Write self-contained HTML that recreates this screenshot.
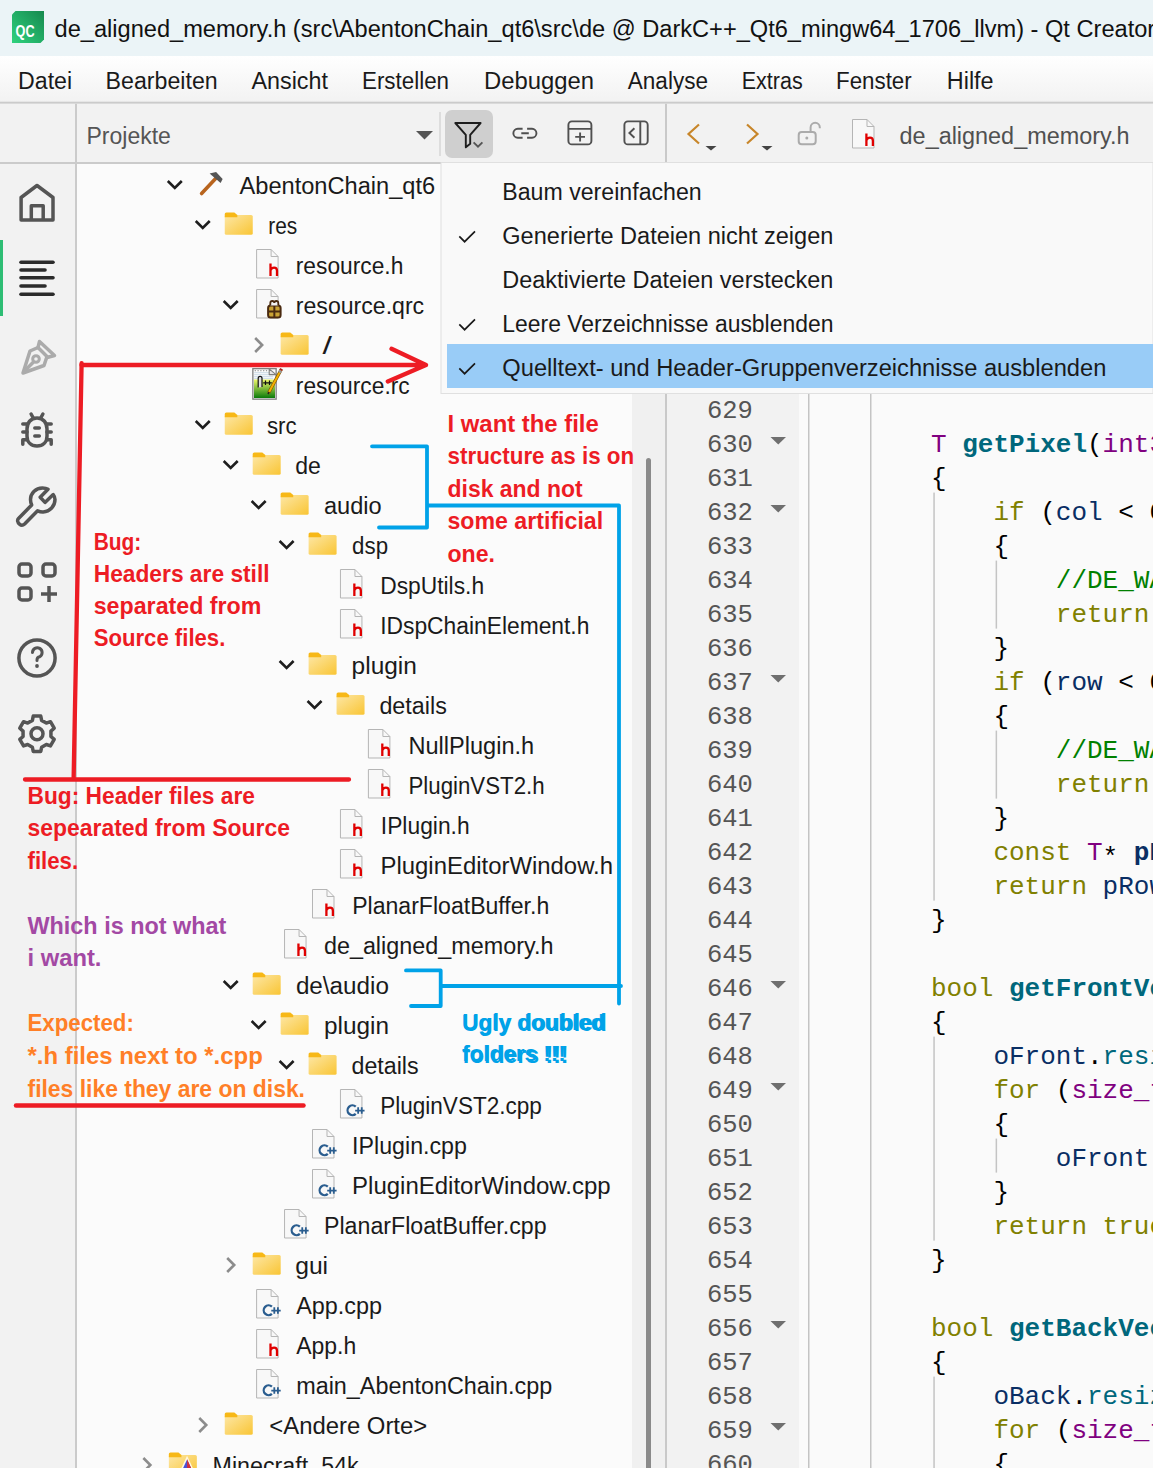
<!DOCTYPE html>
<html><head><meta charset="utf-8"><title>Qt Creator</title>
<style>html,body{margin:0;padding:0;overflow:hidden;background:#fafafa;width:1153px;height:1468px} svg{display:block} text{white-space:pre}</style>
</head><body><svg width="1153" height="1468" viewBox="0 0 1153 1468" font-family='"Liberation Sans", sans-serif'><rect x="0" y="0" width="1153" height="56" fill="#ebf4f7"/><defs><linearGradient id="mg" x1="0" y1="0" x2="0" y2="1"><stop offset="0" stop-color="#ffffff"/><stop offset="1" stop-color="#f2f2f2"/></linearGradient><linearGradient id="fold" x1="0" y1="0" x2="1" y2="1"><stop offset="0" stop-color="#fde7a6"/><stop offset="1" stop-color="#f9c534"/></linearGradient><linearGradient id="qc" x1="0" y1="1" x2="1" y2="0"><stop offset="0" stop-color="#2fd27e"/><stop offset="1" stop-color="#16894e"/></linearGradient><linearGradient id="rcg" x1="0" y1="0" x2="0" y2="1"><stop offset="0" stop-color="#eef86a"/><stop offset="1" stop-color="#0a7a0a"/></linearGradient></defs><rect x="0" y="56" width="1153" height="46" fill="url(#mg)"/><rect x="0" y="101.7" width="1153" height="2.1" fill="#cbcbcb"/><rect x="0" y="103.8" width="1153" height="58.2" fill="#f2f2f2"/><rect x="0" y="164" width="75" height="1304" fill="#f2f2f2"/><rect x="77" y="164" width="555" height="1304" fill="#fbfbfb"/><rect x="632" y="164" width="33" height="1304" fill="#f0f0f0"/><rect x="646" y="458" width="5" height="1020" rx="2.5" fill="#8a8a8a"/><rect x="75" y="103.8" width="2" height="1364.2" fill="#cbcbcb"/><rect x="0" y="162" width="1153" height="2" fill="#cbcbcb"/><rect x="665" y="103.8" width="2" height="1364.2" fill="#c9c9c9"/><rect x="667" y="163" width="132" height="1305" fill="#f2f2f2"/><rect x="799" y="163" width="354" height="1305" fill="#fafafa"/><rect x="808" y="163" width="1.5" height="1305" fill="#c4c4c4"/><rect x="870" y="163" width="1.5" height="1305" fill="#c4c4c4"/><path d="M15.5 11 H44 V39.5 L40.5 43 H12 V14.5 Z" fill="url(#qc)"/><text x="15.6" y="37.3" font-size="16" fill="#ffffff" font-weight="bold" textLength="19.0" lengthAdjust="spacingAndGlyphs">QC</text><text x="54.5" y="37" font-size="23.5" fill="#111" textLength="1100.7" lengthAdjust="spacingAndGlyphs">de_aligned_memory.h (src\AbentonChain_qt6\src\de @ DarkC++_Qt6_mingw64_1706_llvm) - Qt Creator</text><text x="18.1" y="88.5" font-size="23" fill="#1a1a1a" textLength="54.0" lengthAdjust="spacingAndGlyphs">Datei</text><text x="105.6" y="88.5" font-size="23" fill="#1a1a1a" textLength="112.12" lengthAdjust="spacingAndGlyphs">Bearbeiten</text><text x="251.5" y="88.5" font-size="23" fill="#1a1a1a" textLength="76.48" lengthAdjust="spacingAndGlyphs">Ansicht</text><text x="362.0" y="88.5" font-size="23" fill="#1a1a1a" textLength="87.01" lengthAdjust="spacingAndGlyphs">Erstellen</text><text x="484.0" y="88.5" font-size="23" fill="#1a1a1a" textLength="110.12" lengthAdjust="spacingAndGlyphs">Debuggen</text><text x="627.8" y="88.5" font-size="23" fill="#1a1a1a" textLength="80.14" lengthAdjust="spacingAndGlyphs">Analyse</text><text x="741.7" y="88.5" font-size="23" fill="#1a1a1a" textLength="60.98" lengthAdjust="spacingAndGlyphs">Extras</text><text x="836.0" y="88.5" font-size="23" fill="#1a1a1a" textLength="75.7" lengthAdjust="spacingAndGlyphs">Fenster</text><text x="946.8" y="88.5" font-size="23" fill="#1a1a1a" textLength="46.81" lengthAdjust="spacingAndGlyphs">Hilfe</text><text x="86.5" y="143.9" font-size="23" fill="#555555" textLength="84.36" lengthAdjust="spacingAndGlyphs">Projekte</text><path d="M416 131 L433 131 L424.5 139.5 Z" fill="#555"/><rect x="439.5" y="112" width="1" height="44" fill="#c8c8c8"/><rect x="445" y="110" width="48" height="48" rx="7" fill="#cfcfcf"/><path d="M455.3 123 H480.6 L470.2 134.8 V143.8 L465.8 147.3 V134.8 Z" fill="none" stroke="#1e1e1e" stroke-width="1.9" stroke-linejoin="round"/><path d="M473.6 142.3 L478 146.7 L482.4 142.3" fill="none" stroke="#555" stroke-width="1.9"/><path d="M522.6 128.8 H517.8 a4.45 4.45 0 0 0 0 8.9 H522.6 M527.1 128.8 H532 a4.45 4.45 0 0 1 0 8.9 H527.1 M521.3 133.25 H528.8" fill="none" stroke="#505050" stroke-width="1.9"/><rect x="568.4" y="121.4" width="23" height="23" rx="3.5" fill="none" stroke="#505050" stroke-width="1.9"/><path d="M568.4 128.9 H591.4 M580.1 132.4 V141.6 M575.2 136.9 H585" fill="none" stroke="#505050" stroke-width="1.9"/><rect x="624.4" y="121.4" width="23.3" height="23" rx="3.5" fill="none" stroke="#505050" stroke-width="1.9"/><path d="M640.3 121.4 V144.4 M634.4 128.2 L629.4 133 L634.4 137.8" fill="none" stroke="#505050" stroke-width="1.9"/><path d="M699 124.5 L688.5 134 L699 143.5" fill="none" stroke="#c8862a" stroke-width="2.2"/><path d="M705.5 146 L716.5 146 L711 150.5 Z" fill="#444"/><path d="M747 124.5 L757.5 134 L747 143.5" fill="none" stroke="#c8862a" stroke-width="2.2"/><path d="M761.5 146 L772.5 146 L767 150.5 Z" fill="#444"/><rect x="798.7" y="131.9" width="17" height="12.4" rx="3" fill="none" stroke="#ababab" stroke-width="2"/><path d="M810.6 131.9 V127.4 a4.6 4.6 0 0 1 9.2 0 V128.3" fill="none" stroke="#ababab" stroke-width="2"/><circle cx="806.8" cy="138" r="1.5" fill="#ababab"/><path d="M167.8 181 L174.8 188 L181.8 181" fill="none" stroke="#1e1e1e" stroke-width="2.6"/><path d="M201.6 193.5 L216.6 177.5" stroke="#b8641e" stroke-width="3.6" stroke-linecap="round"/><path d="M209.6 173.5 L216.1 172 L222.6 179 L220.6 183 Z" fill="#555"/><text x="239.5" y="194.3" font-size="23" fill="#1a1a1a" textLength="195.7" lengthAdjust="spacingAndGlyphs">AbentonChain_qt6</text><path d="M195.75 221 L202.75 228 L209.75 221" fill="none" stroke="#1e1e1e" stroke-width="2.6"/><rect x="224.75" y="215.0" width="28" height="19.8" rx="1.6" fill="url(#fold)"/><path d="M224.75 214.1 a1.6 1.6 0 0 1 1.6 -1.6 H234.35 L237.35 215.1 V217.3 H224.75 Z" fill="#f7b817"/><text x="268.2" y="234.3" font-size="23" fill="#1a1a1a" textLength="28.98" lengthAdjust="spacingAndGlyphs">res</text><path d="M256.6 249.5 H271.1 L278.1 256.5 V278 H256.6 Z" fill="#f8f8f8" stroke="#b5b5b5" stroke-width="1"/><path d="M271.1 249.5 V256.5 H278.1" fill="none" stroke="#b5b5b5" stroke-width="1"/><path d="M270.5 263.6 V276 M270.5 270.2 C271.3 268.3 272.6 267.6 274.1 267.6 C276.1 267.6 277.0 268.8 277.0 270.7 V276" fill="none" stroke="#e00000" stroke-width="2.3"/><text x="295.8" y="274.3" font-size="23" fill="#1a1a1a" textLength="107.5" lengthAdjust="spacingAndGlyphs">resource.h</text><path d="M223.7 301 L230.7 308 L237.7 301" fill="none" stroke="#1e1e1e" stroke-width="2.6"/><path d="M256.6 289.5 H271.1 L278.1 296.5 V318 H256.6 Z" fill="#f8f8f8" stroke="#b5b5b5" stroke-width="1"/><path d="M271.1 289.5 V296.5 H278.1" fill="none" stroke="#b5b5b5" stroke-width="1"/><rect x="268.1" y="305.5" width="12.5" height="12" rx="2.5" fill="#c9a234" stroke="#4a2a10" stroke-width="2"/><path d="M274.35 305.5 V317.5 M268.1 311.5 H280.6" stroke="#4a2a10" stroke-width="2"/><path d="M270.3 305.5 V303 a2 2 0 0 1 4 0 a2 2 0 0 1 4 0 V305.5" fill="#f2f2f2" stroke="#4a2a10" stroke-width="1.8"/><text x="295.8" y="314.3" font-size="23" fill="#1a1a1a" textLength="128.34" lengthAdjust="spacingAndGlyphs">resource.qrc</text><path d="M255.14999999999998 338 L262.15 345 L255.14999999999998 352" fill="none" stroke="#8c8c8c" stroke-width="2.6"/><rect x="280.65" y="335.0" width="28" height="19.8" rx="1.6" fill="url(#fold)"/><path d="M280.65 334.1 a1.6 1.6 0 0 1 1.6 -1.6 H290.25 L293.25 335.1 V337.3 H280.65 Z" fill="#f7b817"/><text x="322.5" y="354.3" font-size="23" fill="#1a1a1a" textLength="9.43" lengthAdjust="spacingAndGlyphs">/</text><rect x="252.85" y="368.65" width="23.3" height="30.5" fill="#fbfbfb" stroke="#7f7f7f" stroke-width="1.3"/><path d="M254.7 370.6 H268.2" stroke="#9a9a9a" stroke-width="1.2" stroke-dasharray="1.2 1.6"/><path d="M254.2 372.7 H273.2 M254.2 374.7 H273.2 M254.2 376.7 H273.2 M254.2 378.7 H273.2" stroke="#c9d9e6" stroke-width="1"/><path d="M269.2 368.8 L276.0 374.6 H269.2 Z" fill="#e6e6e6" stroke="#7f7f7f" stroke-width="1.1" stroke-linejoin="round"/><rect x="254.0" y="379.5" width="21" height="18.5" fill="url(#rcg)"/><path d="M258.2 387.6 V378.2 a1.9 1.9 0 0 1 3.8 0 V387" fill="#dedede" stroke="#111" stroke-width="1.2"/><path d="M263.2 382.8 h4.6 M265.5 380.5 v4.6 M267.2 382.8 h4.6 M269.5 380.5 v4.6" fill="none" stroke="#111" stroke-width="1.2"/><path d="M268.59999999999997 393 L281.2 369.6" stroke="#7a5200" stroke-width="3.2"/><path d="M268.59999999999997 393 L281.2 369.6" stroke="#f5b000" stroke-width="2"/><path d="M279.5 372.6 L280.8 370.2" stroke="#999" stroke-width="3"/><path d="M280.7 370.3 L281.59999999999997 368.7" stroke="#b02020" stroke-width="3"/><path d="M268.0 394 L269.2 391.8" stroke="#222" stroke-width="1.6"/><text x="295.8" y="394.3" font-size="23" fill="#1a1a1a" textLength="113.92" lengthAdjust="spacingAndGlyphs">resource.rc</text><path d="M195.75 421 L202.75 428 L209.75 421" fill="none" stroke="#1e1e1e" stroke-width="2.6"/><rect x="224.75" y="415.0" width="28" height="19.8" rx="1.6" fill="url(#fold)"/><path d="M224.75 414.1 a1.6 1.6 0 0 1 1.6 -1.6 H234.35 L237.35 415.1 V417.3 H224.75 Z" fill="#f7b817"/><text x="266.9" y="434.3" font-size="23" fill="#1a1a1a" textLength="29.67" lengthAdjust="spacingAndGlyphs">src</text><path d="M223.7 461 L230.7 468 L237.7 461" fill="none" stroke="#1e1e1e" stroke-width="2.6"/><rect x="252.7" y="455.0" width="28" height="19.8" rx="1.6" fill="url(#fold)"/><path d="M252.7 454.1 a1.6 1.6 0 0 1 1.6 -1.6 H262.3 L265.3 455.1 V457.3 H252.7 Z" fill="#f7b817"/><text x="295.3" y="474.3" font-size="23" fill="#1a1a1a" textLength="25.65" lengthAdjust="spacingAndGlyphs">de</text><path d="M251.64999999999998 501 L258.65 508 L265.65 501" fill="none" stroke="#1e1e1e" stroke-width="2.6"/><rect x="280.65" y="495.0" width="28" height="19.8" rx="1.6" fill="url(#fold)"/><path d="M280.65 494.1 a1.6 1.6 0 0 1 1.6 -1.6 H290.25 L293.25 495.1 V497.3 H280.65 Z" fill="#f7b817"/><text x="324.0" y="514.3" font-size="23" fill="#1a1a1a" textLength="57.72" lengthAdjust="spacingAndGlyphs">audio</text><path d="M279.59999999999997 541 L286.59999999999997 548 L293.59999999999997 541" fill="none" stroke="#1e1e1e" stroke-width="2.6"/><rect x="308.59999999999997" y="535.0" width="28" height="19.8" rx="1.6" fill="url(#fold)"/><path d="M308.59999999999997 534.1 a1.6 1.6 0 0 1 1.6 -1.6 H318.2 L321.2 535.1 V537.3 H308.59999999999997 Z" fill="#f7b817"/><text x="352.1" y="554.3" font-size="23" fill="#1a1a1a" textLength="35.95" lengthAdjust="spacingAndGlyphs">dsp</text><path d="M340.45000000000005 569.5 H354.95000000000005 L361.95000000000005 576.5 V598 H340.45000000000005 Z" fill="#f8f8f8" stroke="#b5b5b5" stroke-width="1"/><path d="M354.95000000000005 569.5 V576.5 H361.95000000000005" fill="none" stroke="#b5b5b5" stroke-width="1"/><path d="M354.35 583.6 V596 M354.35 590.2 C355.15000000000003 588.3 356.45000000000005 587.6 357.95000000000005 587.6 C359.95000000000005 587.6 360.85 588.8 360.85 590.7 V596" fill="none" stroke="#e00000" stroke-width="2.3"/><text x="380.2" y="594.3" font-size="23" fill="#1a1a1a" textLength="103.92" lengthAdjust="spacingAndGlyphs">DspUtils.h</text><path d="M340.45000000000005 609.5 H354.95000000000005 L361.95000000000005 616.5 V638 H340.45000000000005 Z" fill="#f8f8f8" stroke="#b5b5b5" stroke-width="1"/><path d="M354.95000000000005 609.5 V616.5 H361.95000000000005" fill="none" stroke="#b5b5b5" stroke-width="1"/><path d="M354.35 623.6 V636 M354.35 630.2 C355.15000000000003 628.3 356.45000000000005 627.6 357.95000000000005 627.6 C359.95000000000005 627.6 360.85 628.8 360.85 630.7 V636" fill="none" stroke="#e00000" stroke-width="2.3"/><text x="380.2" y="634.3" font-size="23" fill="#1a1a1a" textLength="209.22" lengthAdjust="spacingAndGlyphs">IDspChainElement.h</text><path d="M279.59999999999997 661 L286.59999999999997 668 L293.59999999999997 661" fill="none" stroke="#1e1e1e" stroke-width="2.6"/><rect x="308.59999999999997" y="655.0" width="28" height="19.8" rx="1.6" fill="url(#fold)"/><path d="M308.59999999999997 654.1 a1.6 1.6 0 0 1 1.6 -1.6 H318.2 L321.2 655.1 V657.3 H308.59999999999997 Z" fill="#f7b817"/><text x="351.6" y="674.3" font-size="23" fill="#1a1a1a" textLength="65.27" lengthAdjust="spacingAndGlyphs">plugin</text><path d="M307.55 701 L314.55 708 L321.55 701" fill="none" stroke="#1e1e1e" stroke-width="2.6"/><rect x="336.55" y="695.0" width="28" height="19.8" rx="1.6" fill="url(#fold)"/><path d="M336.55 694.1 a1.6 1.6 0 0 1 1.6 -1.6 H346.15000000000003 L349.15000000000003 695.1 V697.3 H336.55 Z" fill="#f7b817"/><text x="379.4" y="714.3" font-size="23" fill="#1a1a1a" textLength="67.41" lengthAdjust="spacingAndGlyphs">details</text><path d="M368.4 729.5 H382.9 L389.9 736.5 V758 H368.4 Z" fill="#f8f8f8" stroke="#b5b5b5" stroke-width="1"/><path d="M382.9 729.5 V736.5 H389.9" fill="none" stroke="#b5b5b5" stroke-width="1"/><path d="M382.29999999999995 743.6 V756 M382.29999999999995 750.2 C383.09999999999997 748.3 384.4 747.6 385.9 747.6 C387.9 747.6 388.79999999999995 748.8 388.79999999999995 750.7 V756" fill="none" stroke="#e00000" stroke-width="2.3"/><text x="408.5" y="754.3" font-size="23" fill="#1a1a1a" textLength="125.71" lengthAdjust="spacingAndGlyphs">NullPlugin.h</text><path d="M368.4 769.5 H382.9 L389.9 776.5 V798 H368.4 Z" fill="#f8f8f8" stroke="#b5b5b5" stroke-width="1"/><path d="M382.9 769.5 V776.5 H389.9" fill="none" stroke="#b5b5b5" stroke-width="1"/><path d="M382.29999999999995 783.6 V796 M382.29999999999995 790.2 C383.09999999999997 788.3 384.4 787.6 385.9 787.6 C387.9 787.6 388.79999999999995 788.8 388.79999999999995 790.7 V796" fill="none" stroke="#e00000" stroke-width="2.3"/><text x="408.5" y="794.3" font-size="23" fill="#1a1a1a" textLength="136.1" lengthAdjust="spacingAndGlyphs">PluginVST2.h</text><path d="M340.45000000000005 809.5 H354.95000000000005 L361.95000000000005 816.5 V838 H340.45000000000005 Z" fill="#f8f8f8" stroke="#b5b5b5" stroke-width="1"/><path d="M354.95000000000005 809.5 V816.5 H361.95000000000005" fill="none" stroke="#b5b5b5" stroke-width="1"/><path d="M354.35 823.6 V836 M354.35 830.2 C355.15000000000003 828.3 356.45000000000005 827.6 357.95000000000005 827.6 C359.95000000000005 827.6 360.85 828.8 360.85 830.7 V836" fill="none" stroke="#e00000" stroke-width="2.3"/><text x="380.8" y="834.3" font-size="23" fill="#1a1a1a" textLength="88.83" lengthAdjust="spacingAndGlyphs">IPlugin.h</text><path d="M340.45000000000005 849.5 H354.95000000000005 L361.95000000000005 856.5 V878 H340.45000000000005 Z" fill="#f8f8f8" stroke="#b5b5b5" stroke-width="1"/><path d="M354.95000000000005 849.5 V856.5 H361.95000000000005" fill="none" stroke="#b5b5b5" stroke-width="1"/><path d="M354.35 863.6 V876 M354.35 870.2 C355.15000000000003 868.3 356.45000000000005 867.6 357.95000000000005 867.6 C359.95000000000005 867.6 360.85 868.8 360.85 870.7 V876" fill="none" stroke="#e00000" stroke-width="2.3"/><text x="380.5" y="874.3" font-size="23" fill="#1a1a1a" textLength="232.53" lengthAdjust="spacingAndGlyphs">PluginEditorWindow.h</text><path d="M312.5 889.5 H327.0 L334.0 896.5 V918 H312.5 Z" fill="#f8f8f8" stroke="#b5b5b5" stroke-width="1"/><path d="M327.0 889.5 V896.5 H334.0" fill="none" stroke="#b5b5b5" stroke-width="1"/><path d="M326.4 903.6 V916 M326.4 910.2 C327.2 908.3 328.5 907.6 330.0 907.6 C332.0 907.6 332.9 908.8 332.9 910.7 V916" fill="none" stroke="#e00000" stroke-width="2.3"/><text x="352.2" y="914.3" font-size="23" fill="#1a1a1a" textLength="197.04" lengthAdjust="spacingAndGlyphs">PlanarFloatBuffer.h</text><path d="M284.55 929.5 H299.05 L306.05 936.5 V958 H284.55 Z" fill="#f8f8f8" stroke="#b5b5b5" stroke-width="1"/><path d="M299.05 929.5 V936.5 H306.05" fill="none" stroke="#b5b5b5" stroke-width="1"/><path d="M298.45 943.6 V956 M298.45 950.2 C299.25 948.3 300.55 947.6 302.05 947.6 C304.05 947.6 304.95 948.8 304.95 950.7 V956" fill="none" stroke="#e00000" stroke-width="2.3"/><text x="323.9" y="954.3" font-size="23" fill="#1a1a1a" textLength="229.5" lengthAdjust="spacingAndGlyphs">de_aligned_memory.h</text><path d="M223.7 981 L230.7 988 L237.7 981" fill="none" stroke="#1e1e1e" stroke-width="2.6"/><rect x="252.7" y="975.0" width="28" height="19.8" rx="1.6" fill="url(#fold)"/><path d="M252.7 974.1 a1.6 1.6 0 0 1 1.6 -1.6 H262.3 L265.3 975.1 V977.3 H252.7 Z" fill="#f7b817"/><text x="295.9" y="994.3" font-size="23" fill="#1a1a1a" textLength="93.02" lengthAdjust="spacingAndGlyphs">de\audio</text><path d="M251.64999999999998 1021 L258.65 1028 L265.65 1021" fill="none" stroke="#1e1e1e" stroke-width="2.6"/><rect x="280.65" y="1015.0" width="28" height="19.8" rx="1.6" fill="url(#fold)"/><path d="M280.65 1014.1 a1.6 1.6 0 0 1 1.6 -1.6 H290.25 L293.25 1015.1 V1017.3 H280.65 Z" fill="#f7b817"/><text x="324.0" y="1034.3" font-size="23" fill="#1a1a1a" textLength="64.97" lengthAdjust="spacingAndGlyphs">plugin</text><path d="M279.59999999999997 1061 L286.59999999999997 1068 L293.59999999999997 1061" fill="none" stroke="#1e1e1e" stroke-width="2.6"/><rect x="308.59999999999997" y="1055.0" width="28" height="19.8" rx="1.6" fill="url(#fold)"/><path d="M308.59999999999997 1054.1 a1.6 1.6 0 0 1 1.6 -1.6 H318.2 L321.2 1055.1 V1057.3 H308.59999999999997 Z" fill="#f7b817"/><text x="351.5" y="1074.3" font-size="23" fill="#1a1a1a" textLength="67.11" lengthAdjust="spacingAndGlyphs">details</text><path d="M340.45000000000005 1089.5 H354.95000000000005 L361.95000000000005 1096.5 V1118 H340.45000000000005 Z" fill="#f8f8f8" stroke="#b5b5b5" stroke-width="1"/><path d="M354.95000000000005 1089.5 V1096.5 H361.95000000000005" fill="none" stroke="#b5b5b5" stroke-width="1"/><path d="M355.75000000000006 1106.6 A4.9 4.9 0 1 0 355.75000000000006 1113.9" fill="none" stroke="#2a5d8f" stroke-width="2.3"/><path d="M355.15000000000003 1110.6 H364.55000000000007 M358.15000000000003 1107.3 V1113.8 M361.75000000000006 1107.3 V1113.8" fill="none" stroke="#2a5d8f" stroke-width="1.8"/><text x="380.2" y="1114.3" font-size="23" fill="#1a1a1a" textLength="161.71" lengthAdjust="spacingAndGlyphs">PluginVST2.cpp</text><path d="M312.5 1129.5 H327.0 L334.0 1136.5 V1158 H312.5 Z" fill="#f8f8f8" stroke="#b5b5b5" stroke-width="1"/><path d="M327.0 1129.5 V1136.5 H334.0" fill="none" stroke="#b5b5b5" stroke-width="1"/><path d="M327.8 1146.6 A4.9 4.9 0 1 0 327.8 1153.9" fill="none" stroke="#2a5d8f" stroke-width="2.3"/><path d="M327.2 1150.6 H336.6 M330.2 1147.3 V1153.8 M333.8 1147.3 V1153.8" fill="none" stroke="#2a5d8f" stroke-width="1.8"/><text x="352.1" y="1154.3" font-size="23" fill="#1a1a1a" textLength="114.84" lengthAdjust="spacingAndGlyphs">IPlugin.cpp</text><path d="M312.5 1169.5 H327.0 L334.0 1176.5 V1198 H312.5 Z" fill="#f8f8f8" stroke="#b5b5b5" stroke-width="1"/><path d="M327.0 1169.5 V1176.5 H334.0" fill="none" stroke="#b5b5b5" stroke-width="1"/><path d="M327.8 1186.6 A4.9 4.9 0 1 0 327.8 1193.9" fill="none" stroke="#2a5d8f" stroke-width="2.3"/><path d="M327.2 1190.6 H336.6 M330.2 1187.3 V1193.8 M333.8 1187.3 V1193.8" fill="none" stroke="#2a5d8f" stroke-width="1.8"/><text x="352.1" y="1194.3" font-size="23" fill="#1a1a1a" textLength="258.58" lengthAdjust="spacingAndGlyphs">PluginEditorWindow.cpp</text><path d="M284.55 1209.5 H299.05 L306.05 1216.5 V1238 H284.55 Z" fill="#f8f8f8" stroke="#b5b5b5" stroke-width="1"/><path d="M299.05 1209.5 V1216.5 H306.05" fill="none" stroke="#b5b5b5" stroke-width="1"/><path d="M299.85 1226.6 A4.9 4.9 0 1 0 299.85 1233.9" fill="none" stroke="#2a5d8f" stroke-width="2.3"/><path d="M299.25 1230.6 H308.65000000000003 M302.25 1227.3 V1233.8 M305.85 1227.3 V1233.8" fill="none" stroke="#2a5d8f" stroke-width="1.8"/><text x="324.0" y="1234.3" font-size="23" fill="#1a1a1a" textLength="222.55" lengthAdjust="spacingAndGlyphs">PlanarFloatBuffer.cpp</text><path d="M227.2 1258 L234.2 1265 L227.2 1272" fill="none" stroke="#8c8c8c" stroke-width="2.6"/><rect x="252.7" y="1255.0" width="28" height="19.8" rx="1.6" fill="url(#fold)"/><path d="M252.7 1254.1 a1.6 1.6 0 0 1 1.6 -1.6 H262.3 L265.3 1255.1 V1257.3 H252.7 Z" fill="#f7b817"/><text x="295.2" y="1274.3" font-size="23" fill="#1a1a1a" textLength="32.91" lengthAdjust="spacingAndGlyphs">gui</text><path d="M256.6 1289.5 H271.1 L278.1 1296.5 V1318 H256.6 Z" fill="#f8f8f8" stroke="#b5b5b5" stroke-width="1"/><path d="M271.1 1289.5 V1296.5 H278.1" fill="none" stroke="#b5b5b5" stroke-width="1"/><path d="M271.90000000000003 1306.6 A4.9 4.9 0 1 0 271.90000000000003 1313.9" fill="none" stroke="#2a5d8f" stroke-width="2.3"/><path d="M271.3 1310.6 H280.70000000000005 M274.3 1307.3 V1313.8 M277.90000000000003 1307.3 V1313.8" fill="none" stroke="#2a5d8f" stroke-width="1.8"/><text x="296.2" y="1314.3" font-size="23" fill="#1a1a1a" textLength="85.78" lengthAdjust="spacingAndGlyphs">App.cpp</text><path d="M256.6 1329.5 H271.1 L278.1 1336.5 V1358 H256.6 Z" fill="#f8f8f8" stroke="#b5b5b5" stroke-width="1"/><path d="M271.1 1329.5 V1336.5 H278.1" fill="none" stroke="#b5b5b5" stroke-width="1"/><path d="M270.5 1343.6 V1356 M270.5 1350.2 C271.3 1348.3 272.6 1347.6 274.1 1347.6 C276.1 1347.6 277.0 1348.8 277.0 1350.7 V1356" fill="none" stroke="#e00000" stroke-width="2.3"/><text x="296.2" y="1354.3" font-size="23" fill="#1a1a1a" textLength="59.97" lengthAdjust="spacingAndGlyphs">App.h</text><path d="M256.6 1369.5 H271.1 L278.1 1376.5 V1398 H256.6 Z" fill="#f8f8f8" stroke="#b5b5b5" stroke-width="1"/><path d="M271.1 1369.5 V1376.5 H278.1" fill="none" stroke="#b5b5b5" stroke-width="1"/><path d="M271.90000000000003 1386.6 A4.9 4.9 0 1 0 271.90000000000003 1393.9" fill="none" stroke="#2a5d8f" stroke-width="2.3"/><path d="M271.3 1390.6 H280.70000000000005 M274.3 1387.3 V1393.8 M277.90000000000003 1387.3 V1393.8" fill="none" stroke="#2a5d8f" stroke-width="1.8"/><text x="296.2" y="1394.3" font-size="23" fill="#1a1a1a" textLength="256.03" lengthAdjust="spacingAndGlyphs">main_AbentonChain.cpp</text><path d="M199.25 1418 L206.25 1425 L199.25 1432" fill="none" stroke="#8c8c8c" stroke-width="2.6"/><rect x="224.75" y="1415.0" width="28" height="19.8" rx="1.6" fill="url(#fold)"/><path d="M224.75 1414.1 a1.6 1.6 0 0 1 1.6 -1.6 H234.35 L237.35 1415.1 V1417.3 H224.75 Z" fill="#f7b817"/><text x="269.3" y="1434.3" font-size="23" fill="#1a1a1a" textLength="157.88" lengthAdjust="spacingAndGlyphs">&lt;Andere Orte&gt;</text><path d="M143.35000000000002 1458 L150.35000000000002 1465 L143.35000000000002 1472" fill="none" stroke="#8c8c8c" stroke-width="2.6"/><rect x="168.85000000000002" y="1455.0" width="28" height="19.8" rx="1.6" fill="url(#fold)"/><path d="M168.85000000000002 1454.1 a1.6 1.6 0 0 1 1.6 -1.6 H178.45000000000002 L181.45000000000002 1455.1 V1457.3 H168.85000000000002 Z" fill="#f7b817"/><path d="M187.05 1457.6 L196.65 1478 H177.65 Z" fill="#4a52d6" stroke="#fff8e0" stroke-width="1.6"/><path d="M187.05 1459 L195.45000000000002 1477.5 H187.05 Z" fill="#d3303a"/><text x="212.5" y="1474.3" font-size="23" fill="#1a1a1a" textLength="146.27" lengthAdjust="spacingAndGlyphs">Minecraft_54k</text><!--CODE--><rect x="933.3" y="492.6" width="1.5" height="408.0" fill="#c4c4c4"/><rect x="995.6" y="560.6" width="1.5" height="68.0" fill="#c4c4c4"/><rect x="995.6" y="730.6" width="1.5" height="68.0" fill="#c4c4c4"/><rect x="933.3" y="1036.6" width="1.5" height="204.0" fill="#c4c4c4"/><rect x="995.6" y="1138.6" width="1.5" height="34.0" fill="#c4c4c4"/><rect x="933.3" y="1376.6" width="1.5" height="170.0" fill="#c4c4c4"/><text x="707" y="417.6" font-size="25.5" fill="#555555" font-family='"Liberation Mono", monospace'>629</text><text x="707" y="451.6" font-size="25.5" fill="#555555" font-family='"Liberation Mono", monospace'>630</text><path d="M770.5 437.0 h15.5 l-7.75 7.5 Z" fill="#6f6f6f"/><text x="931.0" y="451.6" font-size="26" fill="#800080" font-family='"Liberation Mono", monospace'>T</text><text x="962.2" y="451.6" font-size="26" fill="#00677c" font-weight="bold" font-family='"Liberation Mono", monospace'>getPixel</text><text x="1087.0" y="451.6" font-size="26" fill="#000000" font-family='"Liberation Mono", monospace'>(</text><text x="1102.6" y="451.6" font-size="26" fill="#800080" font-family='"Liberation Mono", monospace'>int32_t</text><text x="707" y="485.6" font-size="25.5" fill="#555555" font-family='"Liberation Mono", monospace'>631</text><text x="931.0" y="485.6" font-size="26" fill="#000000" font-family='"Liberation Mono", monospace'>{</text><text x="707" y="519.6" font-size="25.5" fill="#555555" font-family='"Liberation Mono", monospace'>632</text><path d="M770.5 505.0 h15.5 l-7.75 7.5 Z" fill="#6f6f6f"/><text x="993.4000000000001" y="519.6" font-size="26" fill="#808000" font-family='"Liberation Mono", monospace'>if</text><text x="1040.2" y="519.6" font-size="26" fill="#000000" font-family='"Liberation Mono", monospace'>(</text><text x="1055.8" y="519.6" font-size="26" fill="#092e64" font-family='"Liberation Mono", monospace'>col</text><text x="1118.2" y="519.6" font-size="26" fill="#000000" font-family='"Liberation Mono", monospace'>&lt;</text><text x="1149.4" y="519.6" font-size="26" fill="#000000" font-family='"Liberation Mono", monospace'>0</text><text x="707" y="553.6" font-size="25.5" fill="#555555" font-family='"Liberation Mono", monospace'>633</text><text x="993.4000000000001" y="553.6" font-size="26" fill="#000000" font-family='"Liberation Mono", monospace'>{</text><text x="707" y="587.6" font-size="25.5" fill="#555555" font-family='"Liberation Mono", monospace'>634</text><text x="1055.8" y="587.6" font-size="26" fill="#008000" font-family='"Liberation Mono", monospace'>//DE_WARN</text><text x="707" y="621.6" font-size="25.5" fill="#555555" font-family='"Liberation Mono", monospace'>635</text><text x="1055.8" y="621.6" font-size="26" fill="#808000" font-family='"Liberation Mono", monospace'>return</text><text x="707" y="655.6" font-size="25.5" fill="#555555" font-family='"Liberation Mono", monospace'>636</text><text x="993.4000000000001" y="655.6" font-size="26" fill="#000000" font-family='"Liberation Mono", monospace'>}</text><text x="707" y="689.6" font-size="25.5" fill="#555555" font-family='"Liberation Mono", monospace'>637</text><path d="M770.5 675.0 h15.5 l-7.75 7.5 Z" fill="#6f6f6f"/><text x="993.4000000000001" y="689.6" font-size="26" fill="#808000" font-family='"Liberation Mono", monospace'>if</text><text x="1040.2" y="689.6" font-size="26" fill="#000000" font-family='"Liberation Mono", monospace'>(</text><text x="1055.8" y="689.6" font-size="26" fill="#092e64" font-family='"Liberation Mono", monospace'>row</text><text x="1118.2" y="689.6" font-size="26" fill="#000000" font-family='"Liberation Mono", monospace'>&lt;</text><text x="1149.4" y="689.6" font-size="26" fill="#000000" font-family='"Liberation Mono", monospace'>0</text><text x="707" y="723.6" font-size="25.5" fill="#555555" font-family='"Liberation Mono", monospace'>638</text><text x="993.4000000000001" y="723.6" font-size="26" fill="#000000" font-family='"Liberation Mono", monospace'>{</text><text x="707" y="757.6" font-size="25.5" fill="#555555" font-family='"Liberation Mono", monospace'>639</text><text x="1055.8" y="757.6" font-size="26" fill="#008000" font-family='"Liberation Mono", monospace'>//DE_WARN</text><text x="707" y="791.6" font-size="25.5" fill="#555555" font-family='"Liberation Mono", monospace'>640</text><text x="1055.8" y="791.6" font-size="26" fill="#808000" font-family='"Liberation Mono", monospace'>return</text><text x="707" y="825.6" font-size="25.5" fill="#555555" font-family='"Liberation Mono", monospace'>641</text><text x="993.4000000000001" y="825.6" font-size="26" fill="#000000" font-family='"Liberation Mono", monospace'>}</text><text x="707" y="859.6" font-size="25.5" fill="#555555" font-family='"Liberation Mono", monospace'>642</text><text x="993.4000000000001" y="859.6" font-size="26" fill="#808000" font-family='"Liberation Mono", monospace'>const</text><text x="1087.0" y="859.6" font-size="26" fill="#800080" font-family='"Liberation Mono", monospace'>T</text><text x="1102.6" y="865.1" font-size="26" fill="#000000" font-family='"Liberation Mono", monospace'>*</text><text x="1133.8" y="859.6" font-size="26" fill="#092e64" font-weight="bold" font-family='"Liberation Mono", monospace'>pRow</text><text x="707" y="893.6" font-size="25.5" fill="#555555" font-family='"Liberation Mono", monospace'>643</text><text x="993.4000000000001" y="893.6" font-size="26" fill="#808000" font-family='"Liberation Mono", monospace'>return</text><text x="1102.6" y="893.6" font-size="26" fill="#092e64" font-family='"Liberation Mono", monospace'>pRow</text><text x="707" y="927.6" font-size="25.5" fill="#555555" font-family='"Liberation Mono", monospace'>644</text><text x="931.0" y="927.6" font-size="26" fill="#000000" font-family='"Liberation Mono", monospace'>}</text><text x="707" y="961.6" font-size="25.5" fill="#555555" font-family='"Liberation Mono", monospace'>645</text><text x="707" y="995.6" font-size="25.5" fill="#555555" font-family='"Liberation Mono", monospace'>646</text><path d="M770.5 981.0 h15.5 l-7.75 7.5 Z" fill="#6f6f6f"/><text x="931.0" y="995.6" font-size="26" fill="#808000" font-family='"Liberation Mono", monospace'>bool</text><text x="1009.0" y="995.6" font-size="26" fill="#00677c" font-weight="bold" font-family='"Liberation Mono", monospace'>getFrontVec</text><text x="707" y="1029.6" font-size="25.5" fill="#555555" font-family='"Liberation Mono", monospace'>647</text><text x="931.0" y="1029.6" font-size="26" fill="#000000" font-family='"Liberation Mono", monospace'>{</text><text x="707" y="1063.6" font-size="25.5" fill="#555555" font-family='"Liberation Mono", monospace'>648</text><text x="993.4000000000001" y="1063.6" font-size="26" fill="#092e64" font-family='"Liberation Mono", monospace'>oFront</text><text x="1087.0" y="1063.6" font-size="26" fill="#000000" font-family='"Liberation Mono", monospace'>.</text><text x="1102.6" y="1063.6" font-size="26" fill="#00677c" font-family='"Liberation Mono", monospace'>resize</text><text x="707" y="1097.6" font-size="25.5" fill="#555555" font-family='"Liberation Mono", monospace'>649</text><path d="M770.5 1083.0 h15.5 l-7.75 7.5 Z" fill="#6f6f6f"/><text x="993.4000000000001" y="1097.6" font-size="26" fill="#808000" font-family='"Liberation Mono", monospace'>for</text><text x="1055.8" y="1097.6" font-size="26" fill="#000000" font-family='"Liberation Mono", monospace'>(</text><text x="1071.4" y="1097.6" font-size="26" fill="#800080" font-family='"Liberation Mono", monospace'>size_t</text><text x="707" y="1131.6" font-size="25.5" fill="#555555" font-family='"Liberation Mono", monospace'>650</text><text x="993.4000000000001" y="1131.6" font-size="26" fill="#000000" font-family='"Liberation Mono", monospace'>{</text><text x="707" y="1165.6" font-size="25.5" fill="#555555" font-family='"Liberation Mono", monospace'>651</text><text x="1055.8" y="1165.6" font-size="26" fill="#092e64" font-family='"Liberation Mono", monospace'>oFront</text><text x="707" y="1199.6" font-size="25.5" fill="#555555" font-family='"Liberation Mono", monospace'>652</text><text x="993.4000000000001" y="1199.6" font-size="26" fill="#000000" font-family='"Liberation Mono", monospace'>}</text><text x="707" y="1233.6" font-size="25.5" fill="#555555" font-family='"Liberation Mono", monospace'>653</text><text x="993.4000000000001" y="1233.6" font-size="26" fill="#808000" font-family='"Liberation Mono", monospace'>return</text><text x="1102.6" y="1233.6" font-size="26" fill="#808000" font-family='"Liberation Mono", monospace'>true</text><text x="707" y="1267.6" font-size="25.5" fill="#555555" font-family='"Liberation Mono", monospace'>654</text><text x="931.0" y="1267.6" font-size="26" fill="#000000" font-family='"Liberation Mono", monospace'>}</text><text x="707" y="1301.6" font-size="25.5" fill="#555555" font-family='"Liberation Mono", monospace'>655</text><text x="707" y="1335.6" font-size="25.5" fill="#555555" font-family='"Liberation Mono", monospace'>656</text><path d="M770.5 1321.0 h15.5 l-7.75 7.5 Z" fill="#6f6f6f"/><text x="931.0" y="1335.6" font-size="26" fill="#808000" font-family='"Liberation Mono", monospace'>bool</text><text x="1009.0" y="1335.6" font-size="26" fill="#00677c" font-weight="bold" font-family='"Liberation Mono", monospace'>getBackVec</text><text x="707" y="1369.6" font-size="25.5" fill="#555555" font-family='"Liberation Mono", monospace'>657</text><text x="931.0" y="1369.6" font-size="26" fill="#000000" font-family='"Liberation Mono", monospace'>{</text><text x="707" y="1403.6" font-size="25.5" fill="#555555" font-family='"Liberation Mono", monospace'>658</text><text x="993.4000000000001" y="1403.6" font-size="26" fill="#092e64" font-family='"Liberation Mono", monospace'>oBack</text><text x="1071.4" y="1403.6" font-size="26" fill="#000000" font-family='"Liberation Mono", monospace'>.</text><text x="1087.0" y="1403.6" font-size="26" fill="#00677c" font-family='"Liberation Mono", monospace'>resize</text><text x="707" y="1437.6" font-size="25.5" fill="#555555" font-family='"Liberation Mono", monospace'>659</text><path d="M770.5 1423.0 h15.5 l-7.75 7.5 Z" fill="#6f6f6f"/><text x="993.4000000000001" y="1437.6" font-size="26" fill="#808000" font-family='"Liberation Mono", monospace'>for</text><text x="1055.8" y="1437.6" font-size="26" fill="#000000" font-family='"Liberation Mono", monospace'>(</text><text x="1071.4" y="1437.6" font-size="26" fill="#800080" font-family='"Liberation Mono", monospace'>size_t</text><text x="707" y="1471.6" font-size="25.5" fill="#555555" font-family='"Liberation Mono", monospace'>660</text><text x="993.4000000000001" y="1471.6" font-size="26" fill="#000000" font-family='"Liberation Mono", monospace'>{</text><rect x="441" y="162.5" width="712" height="231" fill="#f9f9f9" stroke="#e0e0e0" stroke-width="1"/><rect x="447" y="344" width="706" height="44" fill="#99ccf7"/><text x="502.3" y="200" font-size="23" fill="#1a1a1a" textLength="199.4" lengthAdjust="spacingAndGlyphs">Baum vereinfachen</text><path d="M459.3 236.4 L464.6 241.7 L475 231.4" fill="none" stroke="#1a1a1a" stroke-width="1.7"/><text x="502.3" y="244" font-size="23" fill="#1a1a1a" textLength="331.07" lengthAdjust="spacingAndGlyphs">Generierte Dateien nicht zeigen</text><text x="502.3" y="288" font-size="23" fill="#1a1a1a" textLength="330.93" lengthAdjust="spacingAndGlyphs">Deaktivierte Dateien verstecken</text><path d="M459.3 324.4 L464.6 329.7 L475 319.4" fill="none" stroke="#1a1a1a" stroke-width="1.7"/><text x="502.3" y="332" font-size="23" fill="#1a1a1a" textLength="331.08" lengthAdjust="spacingAndGlyphs">Leere Verzeichnisse ausblenden</text><path d="M459.3 368.4 L464.6 373.7 L475 363.4" fill="none" stroke="#1a1a1a" stroke-width="1.7"/><text x="502.3" y="376" font-size="23" fill="#1a1a1a" textLength="604.08" lengthAdjust="spacingAndGlyphs">Quelltext- und Header-Gruppenverzeichnisse ausblenden</text><path d="M852.5 119.5 H867 L874 126.5 V148 H852.5 Z" fill="#f8f8f8" stroke="#b5b5b5" stroke-width="1"/><path d="M867 119.5 V126.5 H874" fill="none" stroke="#b5b5b5" stroke-width="1"/><path d="M866.4 133.6 V146 M866.4 140.2 C867.2 138.3 868.5 137.6 870 137.6 C872 137.6 872.9 138.8 872.9 140.7 V146" fill="none" stroke="#e00000" stroke-width="2.3"/><text x="899.6" y="143.5" font-size="23" fill="#505050" textLength="229.9" lengthAdjust="spacingAndGlyphs">de_aligned_memory.h</text><path d="M81.5 365 H425 M391.5 348.8 L426 365 L387.8 381.5" fill="none" stroke="#ed1c24" stroke-width="4.3" stroke-linecap="round" stroke-linejoin="round"/><path d="M81.6 363.2 L73.6 779.5 M25 779.5 H349" fill="none" stroke="#ed1c24" stroke-width="4.3" stroke-linecap="round"/><text x="93.7" y="549.8" font-size="24" fill="#ed1c24" font-weight="bold" textLength="47.63" lengthAdjust="spacingAndGlyphs">Bug:</text><text x="93.7" y="581.8" font-size="24" fill="#ed1c24" font-weight="bold" textLength="175.91" lengthAdjust="spacingAndGlyphs">Headers are still</text><text x="93.7" y="614" font-size="24" fill="#ed1c24" font-weight="bold" textLength="167.7" lengthAdjust="spacingAndGlyphs">separated from</text><text x="93.7" y="646.1" font-size="24" fill="#ed1c24" font-weight="bold" textLength="131.62" lengthAdjust="spacingAndGlyphs">Source files.</text><text x="447.5" y="431.9" font-size="24" fill="#ed1c24" font-weight="bold" textLength="151.28" lengthAdjust="spacingAndGlyphs">I want the file</text><text x="447.5" y="464.1" font-size="24" fill="#ed1c24" font-weight="bold" textLength="186.7" lengthAdjust="spacingAndGlyphs">structure as is on</text><text x="447.5" y="496.7" font-size="24" fill="#ed1c24" font-weight="bold" textLength="135.17" lengthAdjust="spacingAndGlyphs">disk and not</text><text x="447.5" y="529.2" font-size="24" fill="#ed1c24" font-weight="bold" textLength="155.61" lengthAdjust="spacingAndGlyphs">some artificial</text><text x="447.5" y="561.9" font-size="24" fill="#ed1c24" font-weight="bold" textLength="47.4" lengthAdjust="spacingAndGlyphs">one.</text><text x="27.5" y="803.8" font-size="24" fill="#ed1c24" font-weight="bold" textLength="227.46" lengthAdjust="spacingAndGlyphs">Bug: Header files are</text><text x="27.5" y="836.1" font-size="24" fill="#ed1c24" font-weight="bold" textLength="262.46" lengthAdjust="spacingAndGlyphs">sepearated from Source</text><text x="27.5" y="868.8" font-size="24" fill="#ed1c24" font-weight="bold" textLength="50.67" lengthAdjust="spacingAndGlyphs">files.</text><text x="27.5" y="933.8" font-size="24" fill="#a349a4" font-weight="bold" textLength="198.77" lengthAdjust="spacingAndGlyphs">Which is not what</text><text x="27.5" y="965.5" font-size="24" fill="#a349a4" font-weight="bold" textLength="73.93" lengthAdjust="spacingAndGlyphs">i want.</text><text x="27.5" y="1030.8" font-size="24" fill="#ff7f27" font-weight="bold" textLength="106.38" lengthAdjust="spacingAndGlyphs">Expected:</text><text x="27.5" y="1064" font-size="24" fill="#ff7f27" font-weight="bold" textLength="235.3" lengthAdjust="spacingAndGlyphs">*.h files next to *.cpp</text><text x="27.5" y="1096.9" font-size="24" fill="#ff7f27" font-weight="bold" textLength="277.49" lengthAdjust="spacingAndGlyphs">files like they are on disk.</text><text x="462.3" y="1031" font-size="24" fill="#00a2e8" font-weight="bold" textLength="144.36" lengthAdjust="spacingAndGlyphs">Ugly doubled</text><text x="462.3" y="1062.7" font-size="24" fill="#00a2e8" font-weight="bold" textLength="106.21" lengthAdjust="spacingAndGlyphs">folders !!!</text><path d="M16 1105.4 H303.5" fill="none" stroke="#ed1c24" stroke-width="4.5" stroke-linecap="round"/><text x="462" y="1030" font-size="22.5" fill="#00a2e8" font-weight="bold">Ugly doubled</text><text x="462" y="1061.4" font-size="22.5" fill="#00a2e8" font-weight="bold">folders !!!</text><path d="M372 446.3 H427 V527.5 H379 M427 505.5 H619 V1003.5" fill="none" stroke="#00a2e8" stroke-width="3.8" stroke-linecap="round" stroke-linejoin="round"/><path d="M406 970.4 H440.7 V1006 H411 M440.7 986 H621" fill="none" stroke="#00a2e8" stroke-width="3.8" stroke-linecap="round" stroke-linejoin="round"/><path d="M21.1 197.5 L37 185.5 L53 197.5 V220 H21.1 Z" fill="none" stroke="#555555" stroke-width="3.5" stroke-linejoin="round"/><path d="M31.3 220 V205.7 H43.2 V220" fill="none" stroke="#555555" stroke-width="3.5" stroke-linejoin="round"/><rect x="0" y="240" width="3" height="76" fill="#2ebd74"/><path d="M21 262.3 H53" stroke="#2b2b2b" stroke-width="3.6" stroke-linecap="round"/><path d="M21 270 H45" stroke="#2b2b2b" stroke-width="3.6" stroke-linecap="round"/><path d="M21 277.8 H53" stroke="#2b2b2b" stroke-width="3.6" stroke-linecap="round"/><path d="M21 286 H45" stroke="#2b2b2b" stroke-width="3.6" stroke-linecap="round"/><path d="M21 294.2 H53" stroke="#2b2b2b" stroke-width="3.6" stroke-linecap="round"/><g fill="none" stroke="#ababab" stroke-width="3.5" stroke-linejoin="round" stroke-linecap="round"><path d="M23 373 L30 351 L38 347.5 L47 356.5 L44 365.5 Z"/><path d="M38 347.5 L39.5 341.5 L54.5 355.5 L47 357.5"/><path d="M33 362.5 L25 370.5"/></g><circle cx="36" cy="359" r="3.3" fill="none" stroke="#ababab" stroke-width="3"/><g fill="none" stroke="#555555" stroke-width="3.5" stroke-linecap="round" stroke-linejoin="round"><path d="M37 418 C43.5 418 47 423 47 429 V436 C47 442 43 446 37 446 C31 446 27 442 27 436 V429 C27 423 30.5 418 37 418 Z"/><path d="M22.8 424 H27 M22.8 432 H27 M27 439.7 H22.8 V444.2 M51.2 424 H47 M51.2 432 H47 M47 439.7 H51.2 V444.2 M31.1 414 L33 417.5 M42.9 414 L41 417.5 M34.8 428 H39.3 M34.8 436 H39.3"/></g><path d="M24.6 524 L37.6 510.8 C40 511.8 41.5 512 43.2 511.9 C50 511.5 55 506 55 499.5 C55 497.5 54.3 496 53.2 494.6 L45 502.4 L40.2 497.2 L48 489.2 C46.5 488.2 44.5 487.9 42.4 487.9 C35.5 487.9 30.5 493.5 30.5 499.5 C30.5 501.8 31 503.5 31.7 505 L18.5 518.4 C17 520 17.5 522.5 19.5 524.2 C21 525.5 23 525.5 24.6 524 Z" fill="none" stroke="#555555" stroke-width="3.5" stroke-linejoin="round"/><g fill="none" stroke="#555555" stroke-width="3.5"><rect x="19" y="564" width="12" height="12" rx="3"/><rect x="43" y="564" width="12" height="12" rx="3"/><rect x="19" y="588" width="12" height="12" rx="3"/><path d="M49 586 V602 M41 594 H57"/></g><circle cx="37" cy="658" r="18.1" fill="none" stroke="#555555" stroke-width="3.5"/><path d="M32.5 652.5 a4.8 4.8 0 1 1 7.2 4.2 a3.2 3.2 0 0 0 -2.7 3.2 V660.5" fill="none" stroke="#555555" stroke-width="3" stroke-linecap="round"/><circle cx="37" cy="666" r="1.9" fill="#555555"/><path d="M32.38 720.37 L33.24 716.10 L40.76 716.10 L41.62 720.37 L46.32 723.08 L50.45 721.69 L54.21 728.21 L50.94 731.09 L50.94 736.51 L54.21 739.39 L50.45 745.91 L46.32 744.52 L41.62 747.23 L40.76 751.50 L33.24 751.50 L32.38 747.23 L27.68 744.52 L23.55 745.91 L19.79 739.39 L23.06 736.51 L23.06 731.09 L19.79 728.21 L23.55 721.69 L27.68 723.08 Z" fill="none" stroke="#555555" stroke-width="3.5" stroke-linejoin="round"/><circle cx="37" cy="733.8" r="6" fill="none" stroke="#555555" stroke-width="3.5"/></svg></body></html>
